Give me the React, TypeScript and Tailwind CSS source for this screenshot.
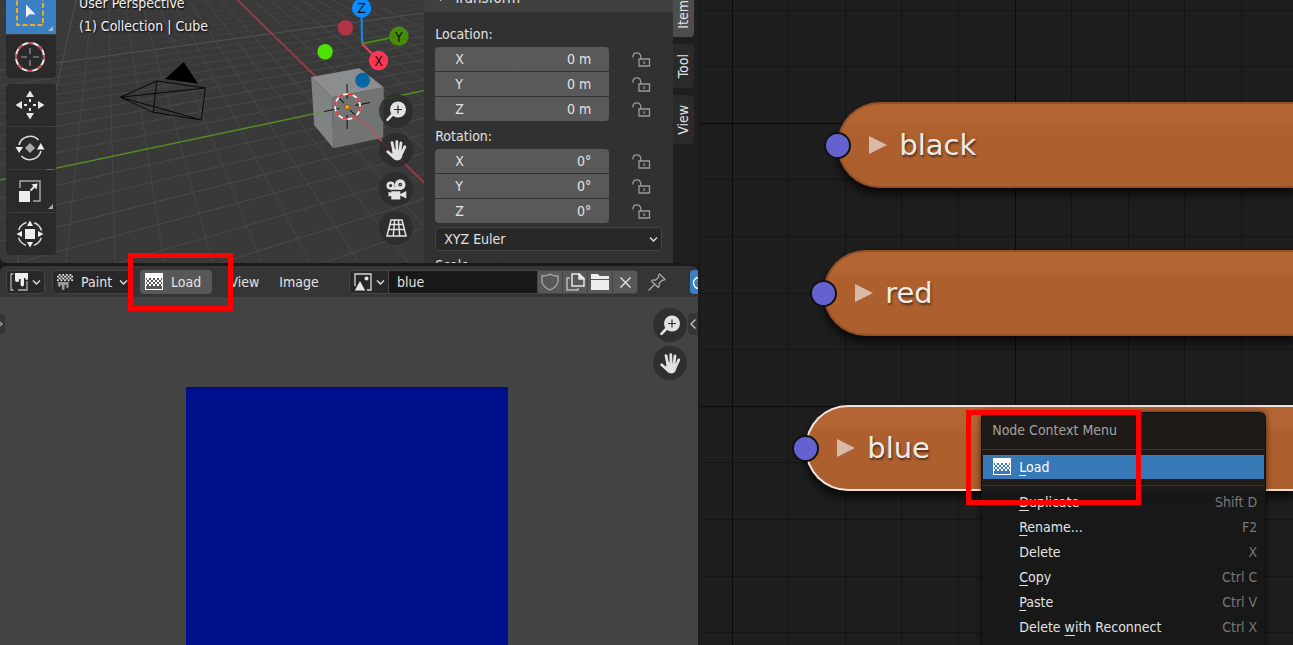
import React from "react";

const HORIZON = -129;
const FLOOR = 262;
const range = (from: number, to: number) =>
  Array.from({ length: to - from + 1 }, (_, i) => from + i);

function Chevron({ className = "" }: { className?: string }) {
  return (
    <svg className={className} width="9" height="7" viewBox="0 0 9 7" fill="none" stroke="#dcdcdc" strokeWidth="1.5">
      <path d="M1 1.5 4.5 5 8 1.5" />
    </svg>
  );
}

function Hand() {
  return (
    <svg width="21" height="21" viewBox="0 0 21 21" fill="none" stroke="#e2e2e2" strokeLinecap="round">
      <path strokeWidth="2.8" d="M6 2.6 7.8 11M10.8 1.6 11 10M15 2.8 14 11M18.8 6.8 16 13" />
      <path strokeWidth="2.8" d="M1.700 11.8 6.5 16" />
      <path fill="#e2e2e2" strokeWidth="1.400" strokeLinejoin="round" d="M7 9.600 16.6 12 15.2 17Q13.8 19.800 11.4 19.800 8.600 19.800 7 17.600L4.600 14.600 7.200 13.600Z" />
    </svg>
  );
}

function Magnifier() {
  return (
    <svg width="21" height="21" viewBox="0 0 21 21">
      <path d="M6.5 13.5 1.5 18.8" stroke="#e2e2e2" strokeWidth="2.6" strokeLinecap="round" />
      <circle cx="12" cy="8.5" r="8" fill="#e2e2e2" />
      <path d="M12 4.5v8M8 8.5h8" stroke="#2d2d2d" strokeWidth="1.2" />
    </svg>
  );
}

function MovieCamera() {
  return (
    <svg width="21" height="21" viewBox="0 0 21 21" fill="#e2e2e2">
      <circle cx="14.2" cy="5.6" r="5.3" />
      <circle cx="4.6" cy="6.6" r="4.1" />
      <path d="M4.600 8h9v2.700h-9zM5.300 12.300h9v2.700l6-3v7.500l-6-3v3.900h-9v-3.500l-2.800.6v-4.500l2.800.6z" />
      <circle cx="14.200" cy="5.600" r="1.900" fill="#2d2d2d" />
      <circle cx="4.600" cy="6.600" r="1.600" fill="#2d2d2d" />
      <circle cx="14.200" cy="5.600" r=".7" />
    </svg>
  );
}

function PerspectiveGrid() {
  return (
    <svg width="21" height="18" viewBox="0 0 21 18" fill="none" stroke="#e2e2e2" strokeWidth="1.500">
      <path d="M5 1h11l4 16H1zM3.900 5.500h13.200M2.700 10.500h15.600M8.600 1 7.300 17M12.400 1l1.300 16" />
    </svg>
  );
}

function Checker({ rows, y, fill = "#fff" }: { rows: number; y: number; fill?: string }) {
  return (
    <>
      {range(0, rows - 1).map((r) =>
        range(0, 4).map((c) => (
          <rect key={`${r}-${c}`} x={c * 4 + (r % 2 ? 0 : 2)} y={y + r * 2} width={r % 2 === 0 && c === 4 ? 0 : 2} height="2" fill={fill} />
        ))
      )}
    </>
  );
}

function TextureIcon() {
  return (
    <svg width="18" height="18" viewBox="0 0 18 18" shapeRendering="crispEdges">
      <path fill="#fff" d="M0 0h18v5H0zM0 5h1v12H0zM17 5h1v12h-1zM0 16h18v1H0z" />
      <Checker rows={4} y={5} />
    </svg>
  );
}

function PaintIcon() {
  return (
    <svg width="18" height="18" viewBox="0 0 18 18">
      <Checker rows={4} y={0} fill="#e6e6e6" />
      <path fill="#999" d="M1 9h12v5.500q0 1.500-1.200 1.500t-1.300-1.500V13q-.2-1-1-1T8.500 13v3.500Q8.500 18 7 18t-1.500-1.500v-3Q5.300 12.500 4.600 12.500T3.800 13.500q-.3 1-1.300 1T1 13z" />
    </svg>
  );
}

function ImageEditorIcon() {
  return (
    <svg width="18" height="18" viewBox="0 0 18 18">
      <path d="M3.500 1H1v16h2.500M8 17h9V8" fill="none" stroke="#b0b0b0" strokeWidth="1.300" />
      <path fill="#eee" d="M5 0h13v5.500q0 1.500-1.300 1.500T15.400 5.500V5H14v6.500q0 2-1.700 2t-1.700-2V6H9v1.500Q9 9 7 9T5 7z" />
    </svg>
  );
}

function PictureIcon() {
  return (
    <svg width="18" height="18" viewBox="0 0 18 18">
      <path d="M1 13V1h16v16h-4" fill="none" stroke="#d8d8d8" strokeWidth="1.300" />
      <circle cx="12.500" cy="5.500" r="2" fill="#e6e6e6" />
      <path d="M6 8l5.200 9.500H.8z" fill="#e6e6e6" />
    </svg>
  );
}

function Lock() {
  return (
    <svg width="19" height="15" viewBox="0 0 19 15" fill="none" stroke="#999" strokeWidth="1.300">
      <path d="M.8 5.500q0-4.700 4-4.700t4 4.700V7" />
      <path d="M7 7h10.500v7H7zM12.200 9.300v2.600" />
    </svg>
  );
}

function Scene() {
  return (
    <svg className="absolute inset-0 h-full w-full" viewBox="0 0 698 263" preserveAspectRatio="xMinYMin slice" fill="none">
      <g>
        {range(-24, 8).filter((k) => k !== 0).map((k) => {
          const x = -389 + 102 * k;
          const end = x > 0 ? x - 100 : x;
          return (
            <line key={`a${k}`} x1="1468" y1={HORIZON} x2={end} y2={HORIZON + ((1468 - end) * 391) / (1468 - x)}
              stroke={k === -10 ? "#535353" : "#494949"} opacity={k === -10 ? 1 : k < -3 ? Math.max(0.35, 1 + (k + 3) * 0.07) : 1} />
          );
        })}
        {range(-28, 8).filter((k) => k !== 0).map((k) => (
          <line key={`b${k}`} x1="105" y1={HORIZON} x2={505 + 48.75 * k} y2={FLOOR}
            stroke={k === -10 ? "#535353" : "#494949"} opacity={k < -10 ? 0.5 : 0.85} />
        ))}
      </g>
      <path d="M0 180 424 90.500 698 33" stroke="#538d22" strokeWidth="1.500" />
      <path d="M237.500 0 505 262" stroke="#a63c4a" strokeWidth="1.500" />
      <g stroke="#090909" strokeWidth="1">
        <path d="M120.500 97.300 156.700 81 205.300 88 201.300 120 153.300 112.300zM156.700 81 153.300 112.300M120.500 97.300 205.300 88M120.500 97.300 201.300 120" />
        <path d="M183.700 62 165 79 198 83.700z" fill="#000" stroke="none" />
      </g>
      <path d="M311 77 359.300 68.300 383.700 87.300 331.700 97.300z" fill="#8b8d8e" />
      <path d="M311 77 331.700 97.300 333.300 148.300 314 125z" fill="#808383" />
      <path d="M331.700 97.300 383.700 87.300 383 137.700 333.300 148.300z" fill="#717473" />
      <path d="M313 114 322 112" stroke="#5e9a3c" />
      <path d="M358 118 368 127 384 143" stroke="#b9515c" strokeWidth="1.300" />
      <path d="M347 84v15M347 115v14M324 111.500l15-3M355 105.500l15-3M338 97l6 6M350 110l7 7" stroke="#141414" />
      <circle cx="347.500" cy="106.500" r="12.500" stroke="#f2f2f2" strokeWidth="1.800" />
      <circle cx="347.500" cy="106.500" r="12.500" stroke="#f02a2a" strokeWidth="1.800" strokeDasharray="4.900 4.900" />
      <circle cx="347" cy="107" r="2.500" fill="#ff9b1a" stroke="#5a3500" strokeWidth=".6" />
      <g fontSize="14" fill="#111" textAnchor="middle">
        <path d="M362 43.700 361.300 8" stroke="#0a8cf5" strokeWidth="2" />
        <path d="M362 43.700 398 36.300" stroke="#478b10" strokeWidth="2" />
        <path d="M362 43.700 378 60" stroke="#ff3653" strokeWidth="2" />
        <circle cx="345.300" cy="27.700" r="7.700" fill="#ae3446" />
        <circle cx="325" cy="51.700" r="7.700" fill="#4fe005" />
        <circle cx="362.500" cy="80.200" r="7.500" fill="#0766a4" />
        <circle cx="361.500" cy="8" r="9.700" fill="#0a8cff" />
        <circle cx="398.800" cy="36.300" r="9.700" fill="#478909" />
        <circle cx="378.500" cy="60.500" r="9.700" fill="#ff3653" />
        <text x="361.500" y="13">Z</text>
        <text x="398.800" y="41.500">Y</text>
        <text x="378.500" y="65.500">X</text>
      </g>
    </svg>
  );
}

const toolIcons = {
  select: (
    <svg width="30" height="30" viewBox="0 0 30 30">
      <rect x="2" y="2" width="26" height="26" fill="none" stroke="#f5a623" strokeWidth="2" strokeDasharray="5 2.500" />
      <path d="M11 7.500v13l3.600-3.200 6 .2z" fill="#f0f0f0" />
    </svg>
  ),
  cursor: (
    <svg width="32" height="32" viewBox="0 0 32 32" fill="none">
      <circle cx="16" cy="16" r="14" stroke="#eee" strokeWidth="2" />
      <circle cx="16" cy="16" r="14" stroke="#c14a4f" strokeWidth="2" strokeDasharray="5.500 5.500" strokeDashoffset="2.700" />
      <path d="M16 7v6M16 19v6M7 16h6M19 16h6" stroke="#999" strokeWidth="1.200" />
    </svg>
  ),
  move: (
    <svg width="30" height="30" viewBox="0 0 30 30" fill="#e6e6e6">
      <path d="M15 .5 19 7h-8zM15 29.500 11 23h8zM.5 15 7 11v8zM29.500 15 23 19v-8z" />
      <path d="M14 9h2v3h-2zM14 18h2v3h-2zM9 14h3v2H9zM18 14h3v2h-3z" />
    </svg>
  ),
  rotate: (
    <svg width="30" height="30" viewBox="0 0 30 30" fill="none">
      <path d="M4 12A11.500 11.500 0 0 1 23.500 7M26 18A11.500 11.500 0 0 1 6.500 23" stroke="#dcdcdc" strokeWidth="1.500" />
      <path d="M.5 14h7.500L4.200 20zM22 16.500h7.500L25.700 10z" fill="#eee" />
      <path d="M15 10l5 5-5 5-5-5z" fill="#aaa" />
    </svg>
  ),
  scale: (
    <svg width="24" height="24" viewBox="0 0 24 24" fill="none">
      <path d="M2 9V2h20v20h-7" stroke="#a8a8a8" strokeWidth="1.500" />
      <path d="M1 12h11v11H1z" fill="#eee" />
      <path d="M12.500 11.500 16 8" stroke="#eee" strokeWidth="1.800" />
      <path d="M13.500 5.500 19.500 4.500 18.500 10.500z" fill="#eee" />
    </svg>
  ),
  transform: (
    <svg width="30" height="30" viewBox="0 0 30 30" fill="none">
      <circle cx="15" cy="15" r="12" stroke="#dcdcdc" strokeWidth="1.400" strokeDasharray="11 7.850" strokeDashoffset="-3.900" />
      <path d="M10 10h10v10H10z" fill="#eee" />
      <path d="M15 1.500 18 7h-6zM15 28.500 12 23h6zM1.500 15 7 12v6zM28.500 15 23 18v-6z" fill="#eee" />
    </svg>
  ),
};

function ToolButton({ name, children, className, corner = "" }: { name: string; children: React.ReactNode; className: string; corner?: string }) {
  return (
    <button aria-label={name} className={`relative flex w-full items-center justify-center pr-0.5 ${className}`}>
      {children}
      {corner && (
        <svg className="absolute right-[3px] bottom-[3px]" width="5" height="5" viewBox="0 0 4 4">
          <path d="M4 0v4H0z" fill={corner} />
        </svg>
      )}
    </button>
  );
}

function RoundButton({ name, children }: { name: string; children: React.ReactNode }) {
  return (
    <button aria-label={name} className="flex size-[34px] items-center justify-center rounded-full bg-[#2b2b2b]/80">
      {children}
    </button>
  );
}

function Fields({ title, value }: { title: string; value: string }) {
  return (
    <fieldset>
      <legend className="mb-[3px] h-5 leading-5">{title}:</legend>
      <div className="flex flex-col gap-px">
        {["X", "Y", "Z"].map((axis) => (
          <div key={axis} className="group flex h-6 items-center gap-[23px]">
            <label className="flex h-full w-[174px] items-center bg-[#595959] pr-[18px] pl-5 group-first:rounded-t group-last:rounded-b">
              <span>{axis}</span>
              <input aria-label={`${title} ${axis}`} defaultValue={value} className="min-w-0 flex-1 bg-transparent text-right outline-none" />
            </label>
            <button aria-label={`Lock ${title} ${axis}`}><Lock /></button>
          </div>
        ))}
      </div>
    </fieldset>
  );
}

function TransformPanel() {
  return (
    <section className="w-[249px] shrink-0 overflow-hidden bg-[#303030]/95">
      <h2 className="-mt-4 flex h-7 items-center gap-2 bg-[#404040] pl-3 text-[15px]">
        <Chevron />Transform
      </h2>
      <div className="flex flex-col px-[11px] pt-3">
        <Fields title="Location" value="0 m" />
        <div className="mt-[5px]"><Fields title="Rotation" value="0°" /></div>
        <div className="relative mt-1">
          <select aria-label="Rotation mode" className="h-6 w-full appearance-none rounded border border-[#444] bg-[#282828] px-2 outline-none">
            <option>XYZ Euler</option>
          </select>
          <Chevron className="pointer-events-none absolute top-[9px] right-1" />
        </div>
        <p className="mt-1 h-5 leading-5">Scale:</p>
      </div>
    </section>
  );
}

function Viewport() {
  return (
    <section className="relative h-[263px] shrink-0 overflow-hidden rounded-b-md bg-[#393939]">
      <Scene />
      <div className="relative flex h-full">
        <div className="ml-1.5 flex w-[50px] shrink-0 flex-col gap-1.5">
          <div className="flex flex-col gap-px">
            <ToolButton name="Select box" className="h-[34px] bg-[#3a80c3] pb-1.5" corner="#9cc0e2">
              <span className="-mt-1">{toolIcons.select}</span>
            </ToolButton>
            <ToolButton name="Cursor" className="h-[43px] rounded-b bg-[#2a2a2a]">{toolIcons.cursor}</ToolButton>
          </div>
          <div className="flex flex-col gap-px">
            <ToolButton name="Move" className="h-[42px] rounded-t bg-[#2a2a2a]">{toolIcons.move}</ToolButton>
            <ToolButton name="Rotate" className="h-[42px] bg-[#2a2a2a]">{toolIcons.rotate}</ToolButton>
            <ToolButton name="Scale" className="h-[42px] bg-[#2a2a2a]" corner="#aaa">{toolIcons.scale}</ToolButton>
            <ToolButton name="Transform" className="h-[42px] rounded-b bg-[#2a2a2a]">{toolIcons.transform}</ToolButton>
          </div>
        </div>
        <div className="-mt-2 ml-[23px] flex-1 leading-[23px] text-[#f0f0f0] [text-shadow:1px_1px_2px_#000]">
          <p>User Perspective</p>
          <p>(1) Collection | Cube</p>
        </div>
        <div className="mr-[11px] flex flex-col gap-[5px] pt-[94px]">
          <RoundButton name="Zoom view"><Magnifier /></RoundButton>
          <RoundButton name="Move view"><Hand /></RoundButton>
          <RoundButton name="Camera view"><MovieCamera /></RoundButton>
          <RoundButton name="Toggle perspective"><PerspectiveGrid /></RoundButton>
        </div>
        <TransformPanel />
        <div className="flex w-[25px] shrink-0 flex-col items-start gap-[7px] bg-[#1f1f1f]">
          <button className="h-[37px] w-[21px] rounded-br bg-[#4d4d4d]">
            <span className="block rotate-180 pt-2.5 leading-[21px] [writing-mode:vertical-rl]">Item</span>
          </button>
          <button className="flex h-11 w-[21px] items-center rounded-r bg-[#2a2a2a]">
            <span className="rotate-180 leading-[21px] [writing-mode:vertical-rl]">Tool</span>
          </button>
          <button className="flex h-[49px] w-[21px] items-center rounded-r bg-[#2a2a2a]">
            <span className="rotate-180 leading-[21px] [writing-mode:vertical-rl]">View</span>
          </button>
        </div>
      </div>
    </section>
  );
}

function EditorHeader() {
  return (
    <header className="flex h-[31px] shrink-0 items-center overflow-hidden rounded-t-md bg-[#353535] pt-px pl-1.5">
      <button aria-label="Editor type" className="flex h-6 w-[39px] shrink-0 items-center justify-center gap-1 rounded border border-[#454545] bg-[#282828]">
        <ImageEditorIcon /><Chevron />
      </button>
      <div className="relative ml-[7px] flex h-6 w-20 shrink-0 items-center rounded border border-[#454545] bg-[#282828] pl-1">
        <PaintIcon />
        <select aria-label="Mode" className="ml-2 w-14 appearance-none bg-transparent outline-none"><option>Paint</option></select>
        <Chevron className="pointer-events-none absolute top-2 right-[3px]" />
      </div>
      <button className="ml-2 flex h-6 w-[72px] shrink-0 items-center gap-2 rounded bg-[#585858] pl-[5px]">
        <TextureIcon />Load
      </button>
      <button className="ml-2 w-[49px] shrink-0">View</button>
      <button className="w-[60px] shrink-0">Image</button>
      <div className="ml-5 flex h-6 min-w-0 shrink-0 gap-px overflow-hidden rounded border border-[#454545] bg-[#454545]">
        <button aria-label="Browse image" className="flex w-[38px] items-center justify-center gap-1 bg-[#282828]"><PictureIcon /><Chevron /></button>
        <input aria-label="Image name" defaultValue="blue" className="w-[148px] bg-[#181818] pl-2 outline-none" />
        <button aria-label="Fake user" className="flex w-6 items-center justify-center bg-[#585858]">
          <svg width="18" height="18" viewBox="0 0 18 18" fill="none" stroke="#aaa" strokeWidth="1.300"><path d="M9 1Q11.500 3 17 3v5.500Q16 14 9 17 2 14 1 8.500V3Q6.500 3 9 1z" /></svg>
        </button>
        <button aria-label="New image" className="flex w-6 items-center justify-center bg-[#585858]">
          <svg width="19" height="18" viewBox="0 0 19 18" fill="none" stroke="#e6e6e6" strokeWidth="1.500"><path d="M6 1h7.500L18 5.500V13H6z" /><path d="M13 1v5h5z" fill="#e6e6e6" /><path d="M4 5H1v12h11v-2" stroke="#bbb" /></svg>
        </button>
        <button aria-label="Open image" className="flex w-6 items-center justify-center bg-[#585858]">
          <svg width="18" height="16" viewBox="0 0 18 16" fill="#eee"><path d="M0 0h7l1.500 2H18v3H0zM0 6h18v10H0z" /></svg>
        </button>
        <button aria-label="Unlink image" className="flex w-6 items-center justify-center bg-[#585858]">
          <svg width="11" height="11" viewBox="0 0 11 11" stroke="#e6e6e6" strokeWidth="1.400"><path d="M.5.500l10 10M10.500.500l-10 10" /></svg>
        </button>
      </div>
      <button aria-label="Pin" className="ml-[10px] shrink-0">
        <svg width="18" height="18" viewBox="0 0 18 18" fill="none" stroke="#aaa" strokeWidth="1.200" strokeLinejoin="round"><path d="M11.500 1 17 6.500l-1.500.8-1.200-.3-3.300 3.500q.8 2-.7 4L3.500 8q2-1.600 4-.8L10.800 4l-.3-1.500zM6.500 11.500l-6 6" /></svg>
      </button>
      <button aria-label="Overlays" className="ml-auto flex h-6 w-2 shrink-0 items-center justify-start overflow-hidden rounded-l bg-[#3a80c3]">
        <svg className="ml-0.5 shrink-0" width="14" height="14" viewBox="0 0 14 14" fill="none" stroke="#fff" strokeWidth="1.400"><circle cx="7" cy="8" r="5.500" /></svg>
      </button>
    </header>
  );
}

function ImageCanvas() {
  return (
    <section className="relative flex min-h-0 flex-1 justify-center bg-[#434343] pt-[90px] pr-1">
      <div className="w-[322px] bg-[#000f8c]" />
      <button aria-label="Show toolbar" className="absolute top-[17px] left-0 flex h-5 w-[5px] items-center overflow-hidden rounded-r bg-[#353535]">
        <svg width="4" height="8" viewBox="0 0 4 8" fill="none" stroke="#aaa" strokeWidth="1.300"><path d="M-2 .5 2 4l-4 3.500" /></svg>
      </button>
      <button aria-label="Show sidebar" className="absolute top-4 right-0 flex h-[22px] w-[10px] items-center justify-center rounded-l bg-[#353535]">
        <svg width="6" height="10" viewBox="0 0 6 10" fill="none" stroke="#ccc" strokeWidth="1.300"><path d="M5.500.500 1 5l4.500 4.500" /></svg>
      </button>
      <div className="absolute top-[11px] right-[11px] flex flex-col gap-1">
        <RoundButton name="Zoom image"><Magnifier /></RoundButton>
        <RoundButton name="Pan image"><Hand /></RoundButton>
      </div>
    </section>
  );
}

function Node({ label, place, selected = false }: { label: string; place: string; selected?: boolean }) {
  return (
    <div
      className={`absolute right-0 flex h-[86px] items-center rounded-l-full border-y-2 border-l-2 bg-linear-to-b from-[#b46534] from-20% to-[#ad5f2d] to-35% pl-[30px] shadow-[0_6px_9px_1px_rgba(0,0,0,0.65)] ${place} ${selected ? "border-[#f3e3dc]" : "border-[#934f26]"}`}
    >
      <span className="absolute top-7 -left-[15px] size-[27px] rounded-full border-2 border-[#111] bg-[#6462ce]" />
      <svg className="mr-3 shrink-0" width="18" height="18" viewBox="0 0 18 18"><path d="M0 0v18l18-9z" fill="#d9b9a8" /></svg>
      <span className="font-['DejaVu_Sans',sans-serif] text-[29px] leading-none text-[#ebebeb] [text-shadow:1px_2px_2px_rgba(0,0,0,0.5)]">{label}</span>
    </div>
  );
}

const menuItems = [
  { before: "", key: "D", after: "uplicate", shortcut: "Shift D" },
  { before: "", key: "R", after: "ename...", shortcut: "F2" },
  { before: "Delete", key: "", after: "", shortcut: "X" },
  { before: "", key: "C", after: "opy", shortcut: "Ctrl C" },
  { before: "", key: "P", after: "aste", shortcut: "Ctrl V" },
  { before: "Delete ", key: "w", after: "ith Reconnect", shortcut: "Ctrl X" },
];

function ContextMenu() {
  return (
    <div role="menu" className="absolute top-[412px] bottom-0 left-[280px] w-[285px] overflow-hidden rounded-t-md border-x border-t border-[#111] bg-[#181818]/97 shadow-[0_0_6px_rgba(0,0,0,0.6)]">
      <h3 className="h-9 pl-[10px] leading-[35px] text-[#a3a3a3]">Node Context Menu</h3>
      <hr className="border-[#3b3634]" />
      <button role="menuitem" className="mx-px mt-[5px] mb-1.5 flex h-6 w-[281px] items-center gap-2 bg-[#3778b6] pl-[10px] text-white">
        <TextureIcon />
        <span><u className="underline-offset-[3px]">L</u>oad</span>
      </button>
      <hr className="border-[#3b3634]" />
      <div className="flex flex-col pt-1">
        {menuItems.map((item) => (
          <button role="menuitem" key={item.shortcut} className="flex h-[25px] shrink-0 items-center justify-between pr-2 pl-[37px]">
            <span>{item.before}<u className="underline-offset-[3px]">{item.key}</u>{item.after}</span>
            <span className="text-[#777]">{item.shortcut}</span>
          </button>
        ))}
      </div>
    </div>
  );
}

function NodeEditor() {
  return (
    <section className="relative min-w-0 flex-1 overflow-hidden border-l-[3px] border-[#1a1a1a] bg-[#1e1e1e]">
      <svg className="absolute inset-0 h-full w-full" shapeRendering="crispEdges">
        {range(0, 40).map((i) => (
          <line key={`v${i}`} x1={Math.floor(31 + i * 56.6) + 0.5} x2={Math.floor(31 + i * 56.6) + 0.5} y1="0" y2="100%" stroke={i % 5 === 0 ? "#0a0a0a" : "#141414"} />
        ))}
        {range(0, 30).map((i) => (
          <line key={`h${i}`} x1="0" x2="100%" y1={Math.floor(10 + i * 56.6) + 0.5} y2={Math.floor(10 + i * 56.6) + 0.5} stroke={i % 5 === 2 ? "#0a0a0a" : "#141414"} />
        ))}
      </svg>
      <Node label="black" place="top-[102px] left-[136px]" />
      <Node label="red" place="top-[250px] left-[122px]" />
      <Node label="blue" place="top-[405px] left-[104px]" selected />
      <ContextMenu />
      <div className="pointer-events-none absolute top-[410px] left-[265px] h-[95px] w-[175px] border-[5px] border-[#f00]" />
    </section>
  );
}

export default function App() {
  return (
    <main className="flex h-screen overflow-hidden bg-[#1a1a1a] font-['DejaVu_Sans_Condensed','DejaVu_Sans','Noto_Sans',sans-serif] text-[14px] text-[#e2e2e2]">
      <div className="relative flex w-[54%] shrink-0 flex-col gap-[3px]">
        <Viewport />
        <div className="flex min-h-0 flex-1 flex-col">
          <EditorHeader />
          <ImageCanvas />
        </div>
        <div className="pointer-events-none absolute top-[253px] left-32 h-[58px] w-[105px] border-[5px] border-[#f00]" />
      </div>
      <NodeEditor />
    </main>
  );
}
